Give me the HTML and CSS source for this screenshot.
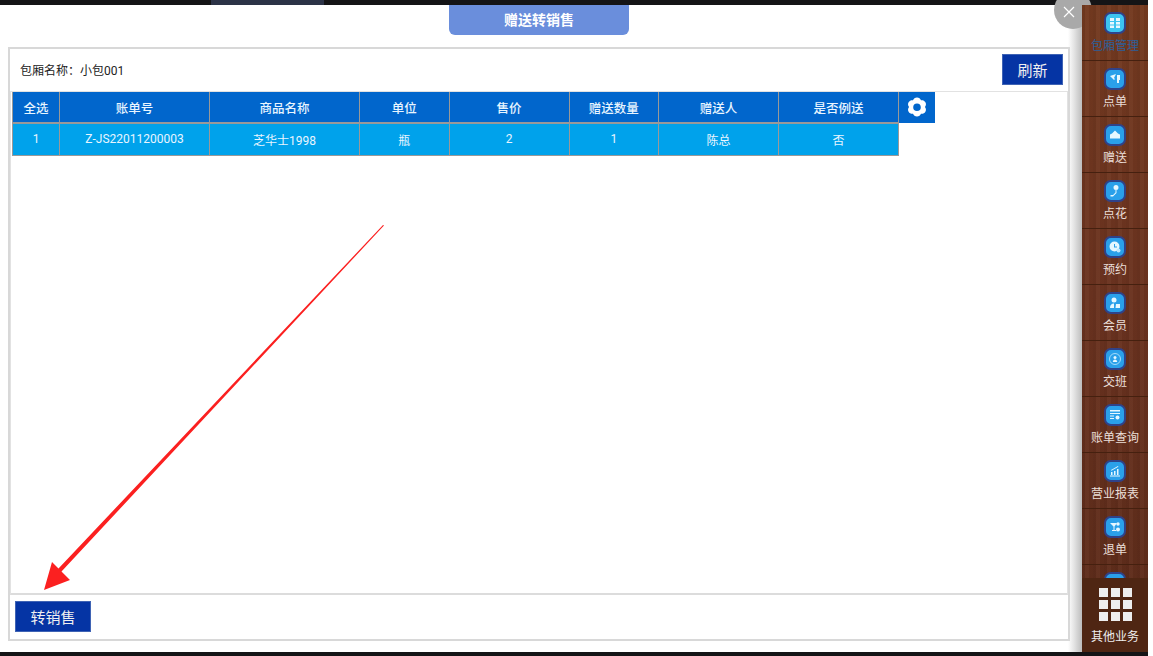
FILE: index.html
```html
<!DOCTYPE html>
<html lang="zh-CN">
<head>
    <meta charset="UTF-8">
    <meta name="viewport" content="width=device-width, initial-scale=1.0">
    <title>赠送转销售</title>
    <link rel="stylesheet" href="styles.css">
</head>
<body>
    <div class="screen">
        <div class="topbar"><span class="topbar-tab"></span></div>

        <div class="app">
            <div class="dialog">
                <div class="dialog-title">赠送转销售</div>
                <span class="dialog-close">
                    <svg viewBox="0 0 12 12" width="12" height="12"><path d="M1 1l10 10M11 1L1 11" stroke="#fff" stroke-width="1.2" fill="none"/></svg>
                </span>

                <div class="panel">
                    <div class="panel-head">
                        <span class="room-name">包厢名称：小包001</span>
                        <button class="btn btn-refresh">刷新</button>
                    </div>

                    <div class="panel-body">
                        <table class="grid">
                            <colgroup>
                                <col class="c-check">
                                <col class="c-wide">
                                <col class="c-wide">
                                <col class="c-unit">
                                <col class="c-mid">
                                <col class="c-unit">
                                <col class="c-mid">
                                <col class="c-mid">
                                <col class="c-gear">
                            </colgroup>
                            <thead>
                                <tr>
                                    <th>全选</th>
                                    <th>账单号</th>
                                    <th>商品名称</th>
                                    <th>单位</th>
                                    <th>售价</th>
                                    <th>赠送数量</th>
                                    <th>赠送人</th>
                                    <th>是否例送</th>
                                    <th class="gear-cell">
                                        <svg viewBox="0 0 24 24" width="24" height="24"><path fill="#fff" fill-rule="evenodd" d="M12 1.5c2 0 3.4 1.2 4 2.8 1.700-.3 3.400.3 4.400 2 1 1.700.6 3.500-.5 4.800 1.100 1.300 1.500 3 .5 4.700-1 1.700-2.700 2.300-4.400 2-.6 1.600-2 2.700-4 2.700s-3.400-1.100-4-2.700c-1.700.3-3.400-.3-4.400-2-1-1.700-.6-3.400.5-4.700-1.100-1.300-1.500-3.100-.5-4.800 1-1.700 2.700-2.300 4.400-2 .6-1.600 2-2.800 4-2.800zM12 7.500a3.800 3.800 0 1 0 0 7.600 3.800 3.800 0 0 0 0-7.600z"/></svg>
                                    </th>
                                </tr>
                            </thead>
                            <tbody>
                                <tr>
                                    <td>1</td>
                                    <td>Z-JS22011200003</td>
                                    <td>芝华士1998</td>
                                    <td>瓶</td>
                                    <td>2</td>
                                    <td>1</td>
                                    <td>陈总</td>
                                    <td>否</td>
                                </tr>
                            </tbody>
                        </table>
                    </div>

                    <div class="panel-foot">
                        <button class="btn btn-convert">转销售</button>
                    </div>
                </div>
            </div>

            <div class="sidebar">
                <div class="side-list">
                    <div class="side-item active">
                        <span class="side-icon"><svg viewBox="0 0 14 14" width="14" height="14"><path fill="#e6f7ff" d="M2 2h4v3H2zM8 2h4v3H8zM2 6h4v2.500H2zM8 6h4v2.500H8zM2 9.500h4V12H2zM8 9.500h4V12H8z"/></svg></span>
                        <span class="side-label">包厢管理</span>
                    </div>
                    <div class="side-item">
                        <span class="side-icon"><svg viewBox="0 0 14 14" width="14" height="14"><path fill="#e6f7ff" d="M2 4l6-2-2 4 1 1-1 1zM9 3h3v5h-1v3H9z"/></svg></span>
                        <span class="side-label">点单</span>
                    </div>
                    <div class="side-item">
                        <span class="side-icon"><svg viewBox="0 0 14 14" width="14" height="14"><path fill="#e6f7ff" d="M7 2.500l3 3 2 1v4H2v-4l2-1z"/></svg></span>
                        <span class="side-label">赠送</span>
                    </div>
                    <div class="side-item">
                        <span class="side-icon"><svg viewBox="0 0 14 14" width="14" height="14"><path fill="#e6f7ff" fill-rule="evenodd" d="M8 1a2.500 2.500 0 1 1 0 5 2.500 2.500 0 0 1 0-5zM7.500 6h1v3L5 12.500H2.500V11H5l2.500-2.500z"/></svg></span>
                        <span class="side-label">点花</span>
                    </div>
                    <div class="side-item">
                        <span class="side-icon"><svg viewBox="0 0 14 14" width="14" height="14"><path fill="#e6f7ff" fill-rule="evenodd" d="M6.500 1.500a5 5 0 1 1 0 10 5 5 0 0 1 0-10zM6 4v3.500h3V6.500H7V4z"/><circle cx="10.500" cy="10.500" r="2" fill="#bfe8ff"/></svg></span>
                        <span class="side-label">预约</span>
                    </div>
                    <div class="side-item">
                        <span class="side-icon"><svg viewBox="0 0 14 14" width="14" height="14"><circle cx="6" cy="4" r="2.500" fill="#e6f7ff"/><path fill="#e6f7ff" d="M2 12c0-3 1.500-4.500 4-4.500V12zM8 8h4v4H7.500z"/></svg></span>
                        <span class="side-label">会员</span>
                    </div>
                    <div class="side-item">
                        <span class="side-icon"><svg viewBox="0 0 14 14" width="14" height="14"><circle cx="7" cy="7" r="5.500" fill="none" stroke="#bfe8ff" stroke-width=".8"/><circle cx="7" cy="5.500" r="1.500" fill="#e6f7ff"/><path fill="#e6f7ff" d="M4.800 10c0-1.600 1-2.500 2.200-2.500s2.200.9 2.200 2.500z"/></svg></span>
                        <span class="side-label">交班</span>
                    </div>
                    <div class="side-item">
                        <span class="side-icon"><svg viewBox="0 0 14 14" width="14" height="14"><path fill="#e6f7ff" d="M2 2h10v1.500H2zM2 5h10v1H2zM2 7.500h4v1H2zM2 10h4v1H2z"/><circle cx="9.500" cy="9.500" r="2" fill="#e6f7ff"/></svg></span>
                        <span class="side-label">账单查询</span>
                    </div>
                    <div class="side-item">
                        <span class="side-icon"><svg viewBox="0 0 14 14" width="14" height="14"><path fill="#e6f7ff" d="M2 11.500h10v1H2zM3 8h1.500v3H3zM6 7h1.500v4H6zM9 5h1.500v6H9zM3 6l7-4 .4.800-7 4z"/></svg></span>
                        <span class="side-label">营业报表</span>
                    </div>
                    <div class="side-item">
                        <span class="side-icon"><svg viewBox="0 0 14 14" width="14" height="14"><path fill="#e6f7ff" d="M2 3h7L6.500 6.500V10H8v1H4v-1h1.500V6.500z"/><circle cx="10" cy="4" r="1.700" fill="#e6f7ff"/><circle cx="10" cy="9.500" r="2" fill="#e6f7ff"/></svg></span>
                        <span class="side-label">退单</span>
                    </div>
                    <div class="side-item">
                        <span class="side-icon"></span>
                    </div>
                </div>

                <div class="side-more">
                    <span class="more-grid">
                        <i></i><i></i><i></i><i></i><i></i><i></i><i></i><i></i><i></i>
                    </span>
                    <span class="more-label">其他业务</span>
                </div>
            </div>
        </div>

        <div class="bottombar"></div>

        <!-- red annotation arrow drawn over the screenshot -->
        <svg class="arrow" viewBox="0 0 1153 656" width="1153" height="656">
            <path fill="#fb2020" d="M384 225.500 L61.500 571.500 L70 580 L44 590 L52 562 L58.500 568.500 L383 225 Z"/>
        </svg>
    </div>
</body>
</html>
```

FILE: styles.css
```css
* {
    box-sizing: border-box;
}

html, body {
    margin: 0;
    height: 100%;
    background: #fff;
    overflow: hidden;
}

body {
    font-family: Roboto, 'Noto Sans CJK SC', sans-serif;
    font-size: 12px;
    color: #222;
}

.screen {
    position: relative;
    display: flex;
    flex-direction: column;
    width: 1148px;
    height: 656px;
}

.topbar {
    height: 5px;
    flex: none;
    background: #141416;
    padding-left: 211px;
}

.topbar-tab {
    display: block;
    width: 113px;
    height: 5px;
    background: #2c3347;
}

.bottombar {
    height: 4px;
    flex: none;
    background: #141416;
}

.app {
    flex: 1;
    display: flex;
    min-height: 0;
}

.dialog {
    position: relative;
    flex: 1;
    display: flex;
    flex-direction: column;
    padding: 0 12px 11px 8px;
    background: linear-gradient(to right, #fff 1068px, #e4e4e4 1074px, #bdbdbd 1082px);
}

.dialog-title {
    align-self: flex-start;
    width: 180px;
    height: 30px;
    margin: 0 0 12px 441px;
    background: #6a8edc;
    border-radius: 0 0 6px 6px;
    color: #fff;
    font-size: 14px;
    font-weight: 700;
    line-height: 30px;
    text-align: center;
}

.dialog-close {
    position: absolute;
    top: -14px;
    right: -10px;
    display: flex;
    align-items: flex-end;
    width: 38px;
    height: 38px;
    padding: 0 0 11px 9px;
    border-radius: 50%;
    background: #a9a9a9;
}

.dialog-close svg {
    display: block;
    width: 12px;
    height: 12px;
}

.panel {
    flex: 1;
    display: flex;
    flex-direction: column;
    border: 2px solid #d8d8d8;
    background: #fff;
    min-height: 0;
}

.panel-head {
    height: 43px;
    flex: none;
    display: flex;
    align-items: center;
    justify-content: space-between;
    padding: 0 5px 1px 10px;
    border-bottom: 1px solid #e2e2e2;
}

.room-name {
    font-size: 12px;
}

.btn {
    border: 1px solid #3f63b4;
    background: #0534a4;
    color: #f0f0f0;
    font-family: inherit;
    font-size: 15px;
    padding: 0;
}

.btn-refresh {
    width: 61px;
    height: 31px;
}

.btn-convert {
    width: 76px;
    height: 31px;
}

.panel-body {
    flex: 1;
    min-height: 0;
    padding-left: 1px;
    border-left: 1px solid #e2e2e2;
    border-right: 1px solid #e2e2e2;
    border-bottom: 2px solid #dcdcdc;
}

.grid {
    table-layout: fixed;
    width: 922px;
    border-collapse: collapse;
    color: #e8f5ff;
    text-align: center;
}

.c-check { width: 47px; }
.c-wide { width: 150px; }
.c-unit { width: 89.500px; }
.c-mid { width: 120px; }
.c-gear { width: 36px; }

.grid th {
    height: 31px;
    padding: 0;
    background: #0166cc;
    border: 1px solid #999;
    border-top-width: 0;
    font-size: 12.500px;
    font-weight: 500;
}

.grid td {
    height: 32px;
    padding: 0;
    background: #00a2eb;
    border: 1px solid #999;
    border-top-width: 2px;
    font-size: 12px;
}

.grid th.gear-cell {
    border: 0;
    line-height: 0;
}

.panel-foot {
    height: 44px;
    flex: none;
    padding: 6px 0 0 5px;
}

.sidebar {
    position: relative;
    width: 66px;
    flex: none;
    overflow: hidden;
    background:
        repeating-linear-gradient(to right, rgba(0, 0, 0, .06) 0 3px, rgba(255, 255, 255, .025) 3px 7px, rgba(0, 0, 0, .03) 7px 11px),
        linear-gradient(to bottom, #743a20, #6b3320 45%, #5c2b1a);
}

.side-item {
    height: 56px;
    display: flex;
    flex-direction: column;
    align-items: center;
    padding-top: 7px;
    border-bottom: 1px solid #45200f;
}

.side-icon {
    display: flex;
    align-items: center;
    justify-content: center;
    width: 22px;
    height: 22px;
    border: 2px solid #2f4289;
    border-radius: 7px;
    background: #2aa0ea;
}

.side-item.active .side-icon {
    background: #3cc4f0;
}

.side-label {
    margin-top: 3px;
    color: #eadfd8;
    font-size: 12px;
    line-height: 18px;
    white-space: nowrap;
}

.side-item.active .side-label {
    color: #2d5f98;
}

.side-more {
    position: absolute;
    left: 0;
    right: 0;
    bottom: 0;
    height: 74px;
    display: flex;
    flex-direction: column;
    align-items: center;
    padding-top: 10px;
    background: #4f2613;
}

.more-grid {
    display: grid;
    grid-template-columns: repeat(3, 9px);
    grid-auto-rows: 9px;
    gap: 3px;
    width: 33px;
}

.more-grid i {
    display: block;
    background: #eeeeee;
}

.more-label {
    margin-top: 7px;
    color: #eee;
    font-size: 12px;
    line-height: 18px;
}

.arrow {
    position: absolute;
    top: 0;
    left: 0;
    pointer-events: none;
}
```
